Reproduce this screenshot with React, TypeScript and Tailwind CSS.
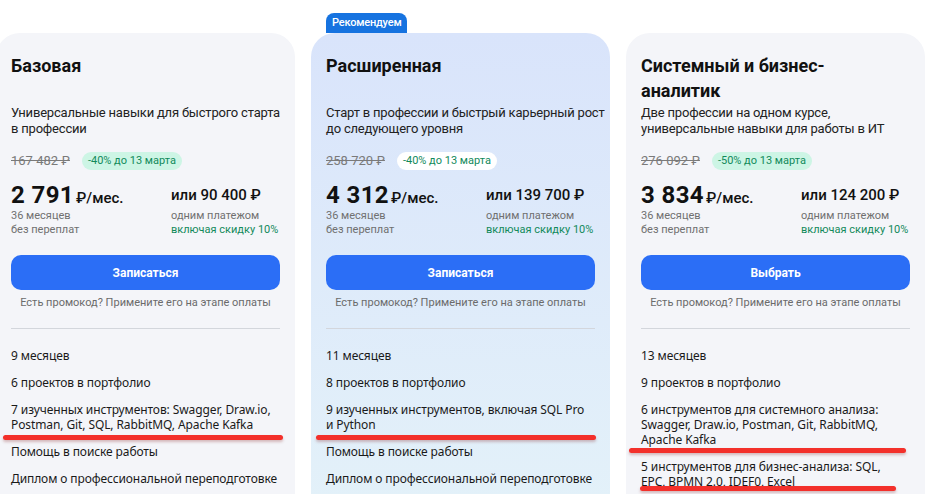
import React from "react";

type Plan = {
  title: string;
  desc: string[];
  old: string;
  discount: string;
  price: string;
  full: string;
  button: string;
  items: string[][];
  featured?: boolean;
};

const plans: Plan[] = [
  {
    title: "Базовая",
    desc: ["Универсальные навыки для быстрого старта", "в профессии"],
    old: "167 482 ₽",
    discount: "-40% до 13 марта",
    price: "2 791",
    full: "или 90 400 ₽",
    button: "Записаться",
    items: [
      ["9 месяцев"],
      ["6 проектов в портфолио"],
      ["7 изученных инструментов: Swagger, Draw.io,", "Postman, Git, SQL, RabbitMQ, Apache Kafka"],
      ["Помощь в поиске работы"],
      ["Диплом о профессиональной переподготовке"],
    ],
  },
  {
    title: "Расширенная",
    desc: ["Старт в профессии и быстрый карьерный рост", "до следующего уровня"],
    old: "258 720 ₽",
    discount: "-40% до 13 марта",
    price: "4 312",
    full: "или 139 700 ₽",
    button: "Записаться",
    featured: true,
    items: [
      ["11 месяцев"],
      ["8 проектов в портфолио"],
      ["9 изученных инструментов, включая SQL Pro", "и Python"],
      ["Помощь в поиске работы"],
      ["Диплом о профессиональной переподготовке"],
    ],
  },
  {
    title: "Системный и бизнес-аналитик",
    desc: ["Две профессии на одном курсе,", "универсальные навыки для работы в ИТ"],
    old: "276 092 ₽",
    discount: "-50% до 13 марта",
    price: "3 834",
    full: "или 124 200 ₽",
    button: "Выбрать",
    items: [
      ["13 месяцев"],
      ["9 проектов в портфолио"],
      ["6 инструментов для системного анализа:", "Swagger, Draw.io, Postman, Git, RabbitMQ,", "Apache Kafka"],
      ["5 инструментов для бизнес-анализа: SQL,", "EPC, BPMN 2.0, IDEF0, Excel"],
    ],
  },
];

function Card({ p }: { p: Plan }) {
  return (
    <div className="relative w-[299px] shrink-0">
      {p.featured && (
        <div className="absolute left-[15px] top-[-20px] h-[20px] px-[6px] rounded-t-[8px] bg-[#1673e0] text-white text-[11px] font-medium leading-[20px] tracking-[-0.2px]">
          Рекомендуем
        </div>
      )}
      <div
        className={
          "h-[470px] rounded-t-[24px] px-[15px] pt-[20px] " +
          (p.featured
            ? "bg-gradient-to-b from-[#d9e4fb] to-[#e3f1f9]"
            : "bg-[#f4f5f9]")
        }
      >
        <div className="h-[50px] text-[18px] font-bold leading-[25px] text-[#111] pr-[60px]">
          {p.title}
        </div>
        <div className="mt-[2px] h-[32px] text-[13px] leading-[16px] tracking-[-0.2px] text-[#222]">
          {p.desc.map((l) => (
            <div key={l} className="whitespace-nowrap">{l}</div>
          ))}
        </div>
        <div className="mt-[15px] flex items-center gap-[12px] h-[18px]">
          <span className="text-[13px] text-[#7a7a7a] line-through decoration-[#7a7a7a]">
            {p.old}
          </span>
          <span
            className={
              "h-[18px] rounded-full px-[6px] text-[11px] leading-[18px] text-[#128a5b] " +
              (p.featured ? "bg-white" : "bg-[#cdf5e5]")
            }
          >
            {p.discount}
          </span>
        </div>
        <div className="mt-[11px] flex">
          <div className="w-[160px]">
            <div className="h-[28px] flex items-baseline">
              <span className="text-[24px] font-bold leading-[28px] tracking-[0.4px] text-[#111]">
                {p.price}
              </span>
              <span className="ml-[2px] text-[15px] font-medium text-[#111]">₽/мес.</span>
            </div>
            <div className="text-[11px] leading-[14px] text-[#707070]">36 месяцев</div>
            <div className="text-[11px] leading-[14px] text-[#707070]">без переплат</div>
          </div>
          <div>
            <div className="h-[28px] text-[15px] font-medium leading-[28px] text-[#111]">
              {p.full}
            </div>
            <div className="text-[11px] leading-[14px] text-[#707070]">одним платежом</div>
            <div className="text-[11px] leading-[14px] text-[#128a5b] whitespace-nowrap">включая скидку 10%</div>
          </div>
        </div>
        <button className="mt-[18px] h-[35px] w-full rounded-[10px] bg-[#2b6ef6] text-white text-[12px] font-bold">
          {p.button}
        </button>
        <div className="mt-[6px] text-center text-[11px] leading-[14px] text-[#6b6b6b]">
          Есть промокод? Примените его на этапе оплаты
        </div>
        <div className="mt-[18px] border-t border-[#d3d6dc]" />
        <ul className="mt-[19px] flex flex-col gap-[12px] font-['Noto_Sans',sans-serif] text-[12px] leading-[15px] tracking-[-0.1px] text-[#1a1a1a]">
          {p.items.map((it) => (
            <li key={it.join(" ")}>
              {it.map((l) => (
                <div key={l} className="whitespace-nowrap">{l}</div>
              ))}
            </li>
          ))}
        </ul>
      </div>
    </div>
  );
}

function RedLine({ x, y, w }: { x: number; y: number; w: number }) {
  return (
    <div
      className="absolute h-[5px] rounded-full bg-[#f3302b] shadow-[0_2px_3px_rgba(120,0,0,0.25)]"
      style={{ left: x, top: y, width: w }}
    />
  );
}

export default function App() {
  return (
    <div className="relative h-[494px] w-[925px] overflow-hidden bg-white font-['Roboto','Noto_Sans',sans-serif]">
      <div className="ml-[-4px] mt-[33px] flex gap-[16px]">
        {plans.map((p) => (
          <Card key={p.title} p={p} />
        ))}
      </div>
      <RedLine x={3} y={435} w={280} />
      <RedLine x={316} y={435} w={280} />
      <RedLine x={629} y={448} w={277} />
      <RedLine x={640} y={486} w={256} />
    </div>
  );
}
